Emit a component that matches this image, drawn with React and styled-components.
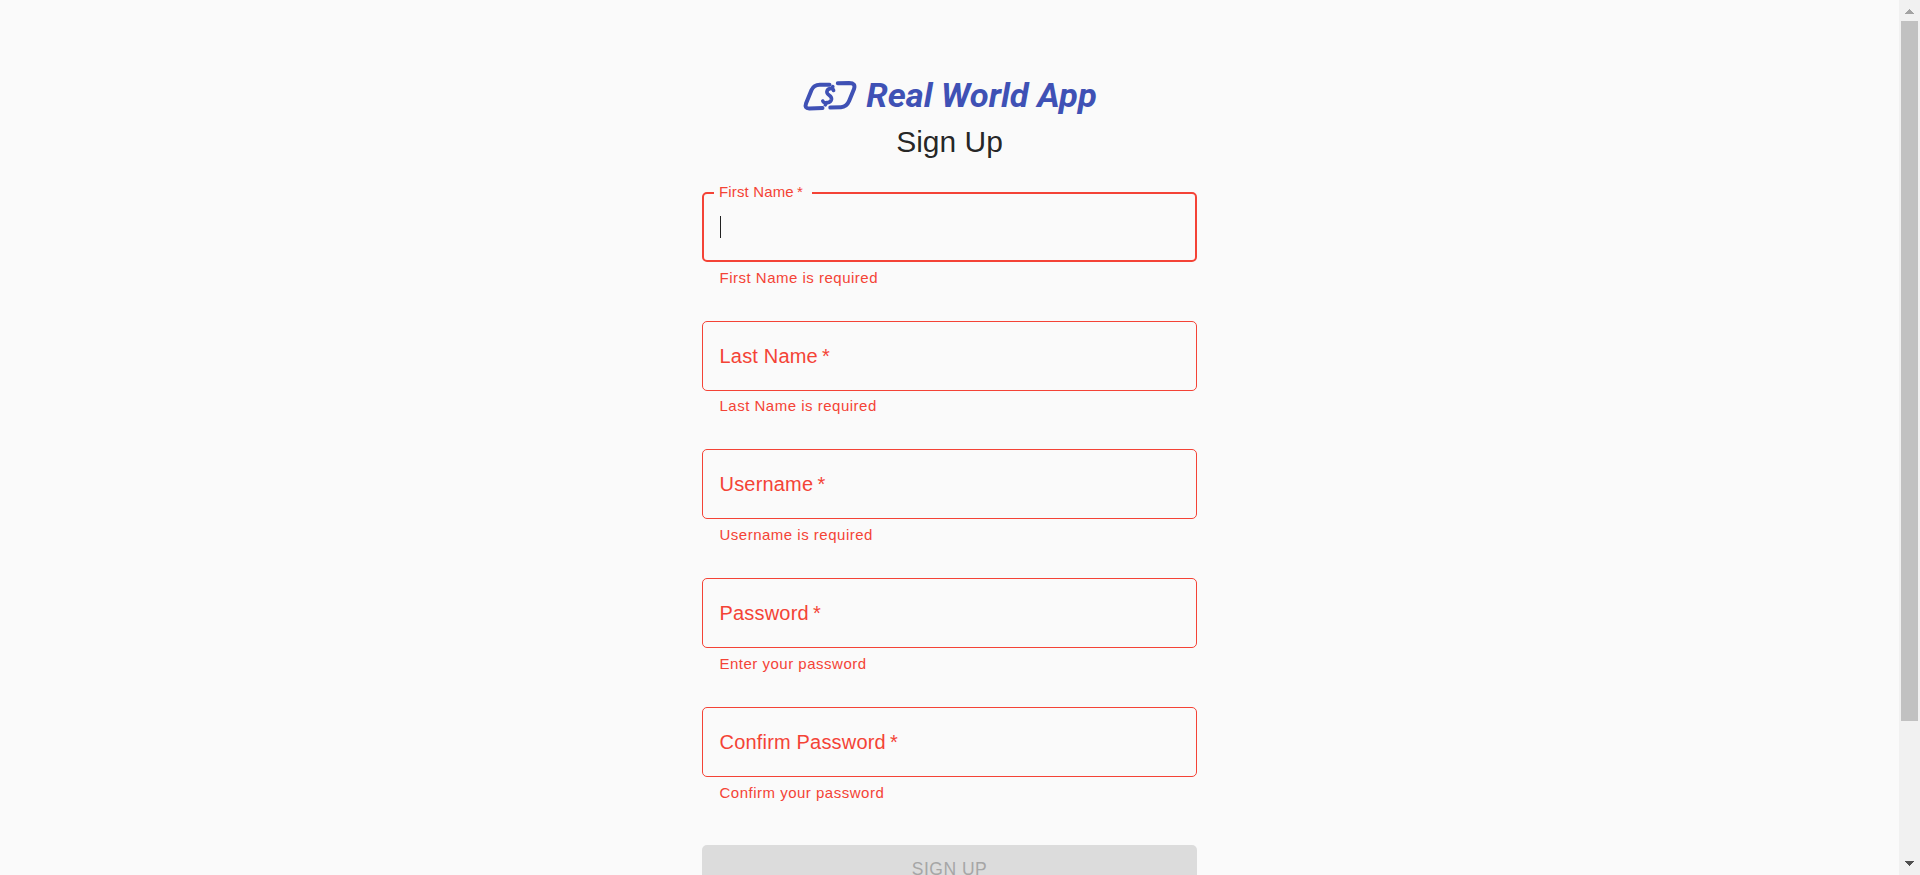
import React from "react";
import styled, { createGlobalStyle, css } from "styled-components";

const Global = createGlobalStyle`
  *, *::before, *::after { box-sizing: border-box; }
  html, body { margin: 0; height: 100%; overflow: hidden; }
  body {
    background: #fafafa;
    color: rgba(0, 0, 0, 0.87);
    font-family: "Liberation Sans", Arial, sans-serif;
  }
`;

const Page = styled.div`
  display: flex;
  height: 100vh;
  overflow: hidden;
`;

const Main = styled.main`
  flex: 1;
  display: flex;
  flex-direction: column;
  align-items: center;
  padding-top: 80px;
`;

const Logo = styled.svg`
  display: block;
  flex: none;
  width: 296px;
  height: 37px;
  overflow: visible;
`;

const LogoText = styled.text`
  font: italic 700 34px Roboto, sans-serif;
  fill: #3f51b5;
`;

const Title = styled.h1`
  margin: 5px 0 0;
  font-size: 30px;
  font-weight: 400;
  line-height: 40px;
`;

const Form = styled.form`
  width: 495px;
  margin-top: 30px;
`;

const Field = styled.div`
  margin-bottom: 30.08px;
`;

const Control = styled.div`
  position: relative;
  display: flex;
  align-items: center;
  height: 70px;
  padding: 0 17.5px;
`;

const Outline = styled.fieldset`
  position: absolute;
  inset: ${(p) => (p.$focused ? -6 : -6.5)}px 0 0;
  margin: 0;
  padding: 0 10px;
  min-width: 0;
  border: ${(p) => (p.$focused ? 2 : 1)}px solid #f44336;
  border-radius: 5px;
  pointer-events: none;
`;

const Notch = styled.legend`
  height: 14px;
  padding: 0;
  width: ${(p) => (p.$open ? "98px" : "0")};
`;

const Label = styled.label`
  color: #f44336;
  font-size: 20px;
  line-height: 20px;
  letter-spacing: 0.19px;
  white-space: pre;
  ${(p) =>
    p.$shrink &&
    css`
      position: absolute;
      left: 17px;
      top: -8px;
      transform: scale(0.75);
      transform-origin: top left;
    `}
`;

const Caret = styled.span`
  width: 1px;
  height: 22px;
  margin: 0 0 0 0.5px;
  background: #212121;
`;

const Helper = styled.p`
  margin: 3.75px 17.5px 0;
  color: #f44336;
  font-size: 15px;
  line-height: 24.9px;
  letter-spacing: 0.5px;
`;

const Submit = styled.button`
  display: block;
  width: 100%;
  height: 45px;
  margin-top: 39.6px;
  padding: 2px 0 0;
  border: 0;
  border-radius: 5px;
  background: #dcdcdc;
  color: #a6a6a6;
  font: 400 17.5px/30px "Liberation Sans", Arial, sans-serif;
  letter-spacing: 0.5px;
`;

const Scrollbar = styled.div`
  display: flex;
  flex-direction: column;
  justify-content: space-between;
  align-items: center;
  width: 21px;
  background: #f1f1f1;
`;

const Thumb = styled.div`
  width: 17px;
  height: 700px;
  margin-bottom: auto;
  background: #c1c1c1;
`;

const Arrow = styled.svg`
  display: block;
  width: 21px;
  height: 21px;
`;

const fields = [
  { label: "First Name", helper: "First Name is required", focused: true },
  { label: "Last Name", helper: "Last Name is required" },
  { label: "Username", helper: "Username is required" },
  { label: "Password", helper: "Enter your password" },
  { label: "Confirm Password", helper: "Confirm your password" },
];

function TextField({ label, helper, focused }) {
  return (
    <Field>
      <Control>
        <Outline $focused={focused}>
          <Notch $open={focused} />
        </Outline>
        <Label $shrink={focused}>{label + "\u2009*"}</Label>
        {focused && <Caret />}
      </Control>
      <Helper>{helper}</Helper>
    </Field>
  );
}

export default function App() {
  return (
    <Page>
      <Global />
      <Main>
        <Logo viewBox="0 0 296 37">
          <g fill="none" stroke="#3f51b5" strokeWidth="4" strokeLinecap="round" strokeLinejoin="round">
            <path d="M27.5 4.7H17.8Q11.8 4.8 9.5 10L4.1 23.2Q2.1 28.7 7.5 28.5L20.5 28" />
            <path d="M35.8 3.3L47.2 2.9Q54 2.9 52 9L47.2 20.8Q44.6 27 39 27.2L28.3 27.6" />
            <path d="M31.6 10.5C31 7.7 25.3 7.8 24.9 11.8C24.6 15.5 30.2 15.2 29.5 19.3C28.7 23.2 21.9 24 20.8 21M29.8 8.6L30.8 6.6M24.6 22.6L23.3 24.8" strokeWidth="3.6" />
          </g>
          <LogoText x="64.2" y="27.3" textLength="230.6" lengthAdjust="spacingAndGlyphs">Real World App</LogoText>
        </Logo>
        <Title>Sign Up</Title>
        <Form>
          {fields.map((f) => (
            <TextField key={f.label} {...f} />
          ))}
          <Submit type="button" disabled>SIGN UP</Submit>
        </Form>
      </Main>
      <Scrollbar>
        <Arrow viewBox="0 0 21 21" shapeRendering="crispEdges">
          <path d="M6 14L10.5 9L15 14Z" fill="#a3a3a3" />
        </Arrow>
        <Thumb />
        <Arrow viewBox="0 0 21 21" shapeRendering="crispEdges">
          <path d="M6 7L10.5 12L15 7Z" fill="#505050" />
        </Arrow>
      </Scrollbar>
    </Page>
  );
}
